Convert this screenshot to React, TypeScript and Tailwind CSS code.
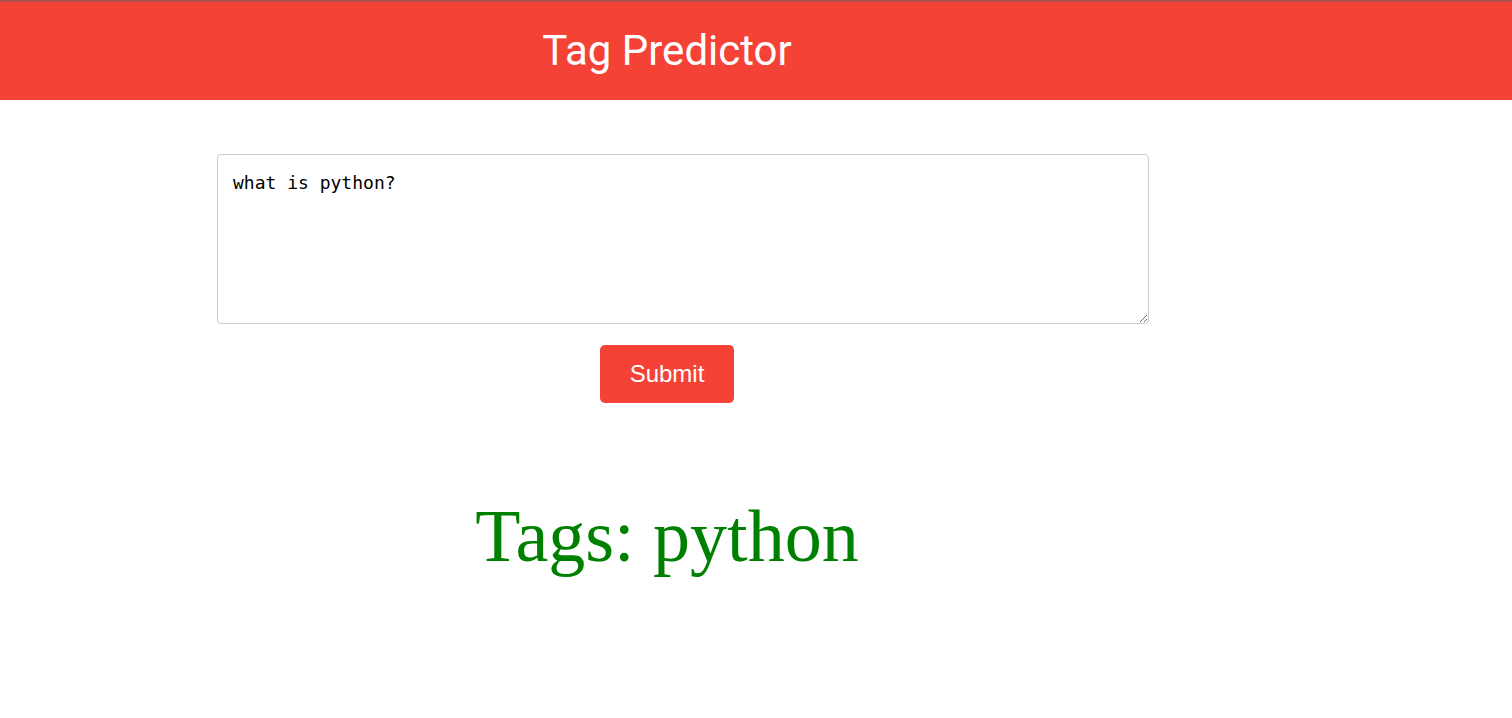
export default function App() {
  return (
    <div className="min-h-[718px] bg-white">
      <header className="h-[100px] bg-[#f44336] border-t-2 border-[#a9544f]">
        <div className="w-[1334px] text-center">
          <h1 className="pt-[25px] text-[42px] leading-[48px] text-white font-['Roboto',sans-serif]">
            Tag Predictor
          </h1>
        </div>
      </header>
      <main className="w-[1334px] flex flex-col items-center">
        <textarea
          className="self-start ml-[217px] mt-[54px] w-[932px] h-[170px] border border-[#cccccc] rounded-[4px] px-[15px] pt-[16px] pb-[10px] text-[18px] leading-[24px] text-black font-['DejaVu_Sans_Mono',monospace] outline-none"
          defaultValue="what is python?"
        />
        <button className="mt-[21px] w-[134px] h-[58px] bg-[#f44336] rounded-[5px] text-white text-[24px] font-['Liberation_Sans',Arial,sans-serif]">
          Submit
        </button>
        <h2 className="mt-[90px] text-[74px] leading-[86px] text-[#008000] font-['Liberation_Serif','Times_New_Roman',serif]">
          Tags: python
        </h2>
      </main>
    </div>
  );
}
